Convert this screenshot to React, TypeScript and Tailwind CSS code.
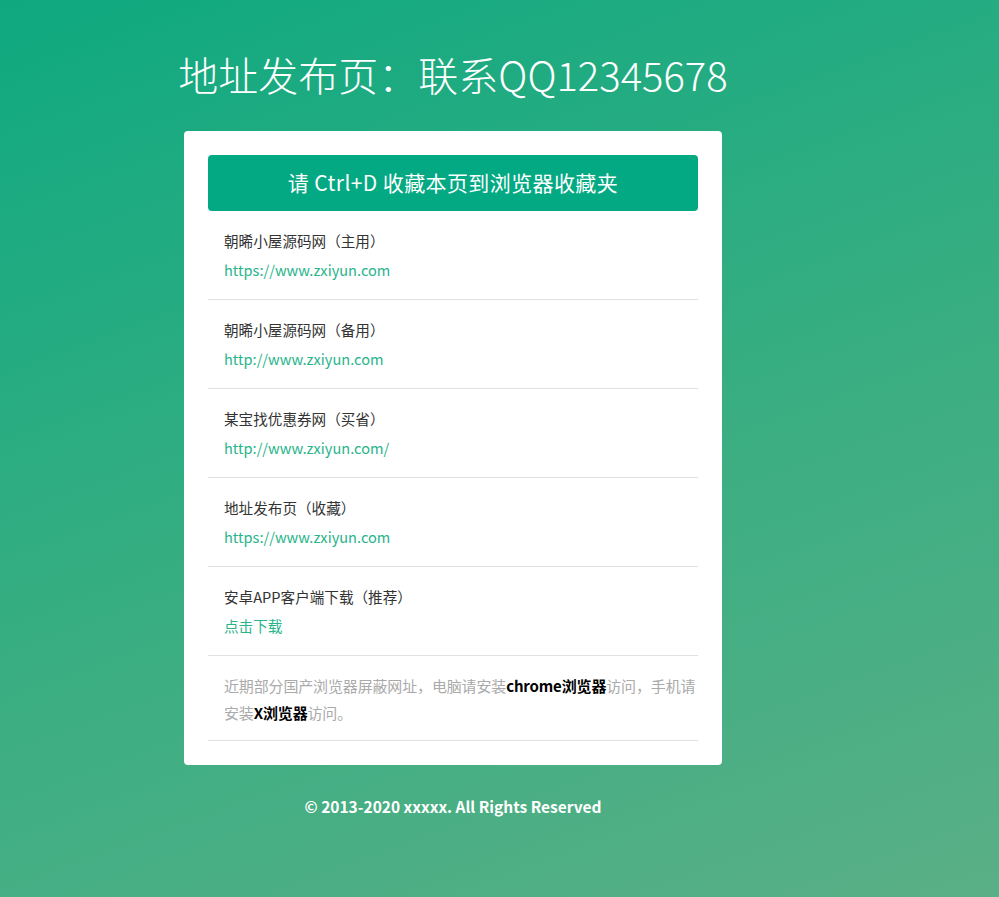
const font = { fontFamily: '"Noto Sans CJK SC", "Noto Sans", sans-serif' };

const links = [
  { name: "朝晞小屋源码网（主用）", url: "https://www.zxiyun.com" },
  { name: "朝晞小屋源码网（备用）", url: "http://www.zxiyun.com" },
  { name: "某宝找优惠券网（买省）", url: "http://www.zxiyun.com/" },
  { name: "地址发布页（收藏）", url: "https://www.zxiyun.com" },
  { name: "安卓APP客户端下载（推荐）", url: "点击下载" },
];

export default function App() {
  return (
    <div
      className="min-h-[897px] w-full bg-[linear-gradient(160deg,#0fa980_0%,#3aae82_55%,#5aaf86_100%)]"
      style={font}
    >
      <div className="ml-[184px] w-[538px] pt-[48px] flex flex-col items-center">
        <h1 className="text-[40px] leading-[52px] font-light text-white whitespace-nowrap">
          地址发布页：联系QQ12345678
        </h1>

        <div className="mt-[31px] w-full bg-white rounded p-6">
          <div className="h-14 rounded bg-[#03a983] flex items-center justify-center text-white text-[21px] tracking-[0.4px]">
            请 Ctrl+D 收藏本页到浏览器收藏夹
          </div>

          {links.map((l) => (
            <div key={l.name} className="border-b border-[#e1e1e1] px-4 py-[15px] text-[14.6px] leading-[29px]">
              <div className="text-[#333]">{l.name}</div>
              <a className="block text-[#29b48b]">{l.url}</a>
            </div>
          ))}

          <div className="border-b border-[#e1e1e1] pl-4 pt-4 pb-[14px] text-[15px] tracking-[-0.15px] leading-[27px] text-[#aaa]">
            近期部分国产浏览器屏蔽网址，电脑请安装<b className="text-black font-bold">chrome浏览器</b>访问，手机请安装
            <b className="text-black font-bold">X浏览器</b>访问。
          </div>
        </div>

        <div className="mt-[30px] text-white font-bold text-[15.5px]">© 2013-2020 xxxxx. All Rights Reserved</div>
      </div>
    </div>
  );
}
